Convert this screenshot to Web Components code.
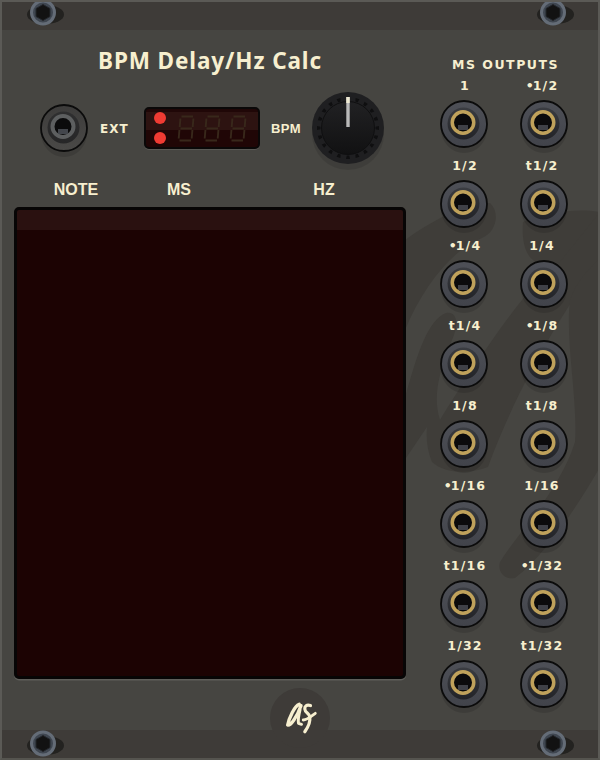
<!DOCTYPE html>
<html lang="en"><head><meta charset="utf-8"><title>BPM Delay/Hz Calc</title>
<style>html,body{margin:0;padding:0;background:#464541}</style></head>
<body>
<bpm-panel>
  <bpm-screw slot="top"></bpm-screw><bpm-screw slot="top"></bpm-screw>
  <bpm-screw slot="bottom"></bpm-screw><bpm-screw slot="bottom"></bpm-screw>
  <bpm-controls slot="left"></bpm-controls>
  <bpm-screen slot="left"></bpm-screen>
  <bpm-out slot="out">1</bpm-out><bpm-out slot="out"><span>•</span>1/2</bpm-out>
  <bpm-out slot="out">1/2</bpm-out><bpm-out slot="out">t1/2</bpm-out>
  <bpm-out slot="out"><span>•</span>1/4</bpm-out><bpm-out slot="out">1/4</bpm-out>
  <bpm-out slot="out">t1/4</bpm-out><bpm-out slot="out"><span>•</span>1/8</bpm-out>
  <bpm-out slot="out">1/8</bpm-out><bpm-out slot="out">t1/8</bpm-out>
  <bpm-out slot="out"><span>•</span>1/16</bpm-out><bpm-out slot="out">1/16</bpm-out>
  <bpm-out slot="out">t1/16</bpm-out><bpm-out slot="out"><span>•</span>1/32</bpm-out>
  <bpm-out slot="out">1/32</bpm-out><bpm-out slot="out">t1/32</bpm-out>
</bpm-panel>
<script>
function def(name, html){
  customElements.define(name, class extends HTMLElement{
    connectedCallback(){
      if(this.shadowRoot) return;
      this.attachShadow({mode:'open'}).innerHTML = typeof html==='function'?html(this):html;
    }
  });
}
def('bpm-panel', `<style>
:host{display:block;position:relative;width:600px;height:760px;box-sizing:border-box;background:#464541;overflow:hidden;
 border:2px solid #5b5a56;border-bottom-color:#55544f;color:#f7efcf}
.wm{position:absolute;left:-2px;top:-2px;width:600px;height:760px;z-index:0}
.band{position:relative;z-index:1;display:flex;justify-content:space-between;height:28px;padding:0 24px 0 25px;background:#3e3b38}
.band.b{padding-top:3px;box-sizing:border-box}
.main{position:relative;z-index:2;display:flex;height:700px;padding-left:12px}
.left{width:392px}
.right{width:160px;margin-left:18px}
h1{margin:0;height:62px;display:flex;align-items:center;justify-content:center;font:700 22.5px/1 "Noto Sans",sans-serif;letter-spacing:.9px;color:#f7efcf}
h2{margin:28px 0 0;height:14px;text-align:center;font:700 12.5px/14px "DejaVu Sans",sans-serif;letter-spacing:1.5px;color:#f7efcf;padding-left:3px}
.grid{display:grid;grid-template-columns:80px 80px;grid-auto-rows:80px;margin-top:8px}
.logo{position:absolute;z-index:3;left:268px;top:686px;width:60px;height:60px}
</style>
<svg class="wm" viewBox="0 0 600 760" aria-hidden="true"><g fill="#3f3d39">
<path d="M405 240C430 222 462 204 490 203C500 212 497 232 482 238C452 250 424 285 405 330Z"/>
<path d="M406 394C418 352 428 320 446 313C456 311 460 322 452 340C440 370 432 395 440 420C452 400 490 340 522 300C548 265 575 235 600 212V262C570 300 520 380 488 467C470 474 445 474 432 462C427 450 426 438 427 427L406 458Z"/>
<path d="M570 300C577 280 590 268 600 258V467C575 510 545 555 515 578C505 580 497 572 500 562C520 530 560 490 575 442C578 400 565 340 570 300Z"/>
<path d="M523 222C545 212 580 208 600 212L560 262C540 270 520 262 523 222Z"/>
</g></svg>
<div class="band"><slot name="top"></slot></div>
<div class="main">
  <div class="left"><h1>BPM Delay/Hz Calc</h1><slot name="left"></slot></div>
  <div class="right"><h2>MS OUTPUTS</h2><div class="grid"><slot name="out"></slot></div></div>
</div>
<div class="band b"><slot name="bottom"></slot></div>
<svg class="logo" viewBox="0 0 60 60" aria-label="logo"><circle cx="30" cy="30" r="30" fill="#3e3b38"/>
<g fill="none" stroke="#f7efcf" stroke-linecap="round" stroke-linejoin="round" transform="translate(-.5 -2)">
<path stroke-width="3.4" d="M29.7 18.3C25 20 19.5 32 18.2 39C21 40 27.5 31 31.5 19.7"/>
<path stroke-width="3" d="M30.5 24C29 30 28.5 35 29 37.3L32 38.3"/>
<path stroke-width="3.2" d="M41 19.5C37 18.5 35 20 35.3 23C35.5 27 40 27 40.3 31C41 36 38 42 35.3 45.7"/>
<path stroke-width="2.8" d="M33.7 34C38 34 42 30 45.8 27.3"/>
</g></svg>`);

def('bpm-screw', `<style>:host{display:block;width:37px;height:28px;position:relative}
svg{position:absolute;left:0;top:-2px;width:37px;height:30px;overflow:visible}</style>
<svg viewBox="0 0 37 30"><ellipse cx="18.5" cy="14.5" rx="18.5" ry="9.5" fill="#232220"/>
<circle cx="16" cy="12.5" r="11.5" fill="#3f4650" stroke="#646c77" stroke-width="3"/>
<polygon points="16,4.5 23,8.5 23,16.5 16,20.5 9,16.5 9,8.5" fill="#121212" stroke="#23262a"/></svg>`);

const portSvg = (ring, outer, mid, rw, tab) => `<svg viewBox="0 0 48 58" width="48" height="58">
<defs><linearGradient id="g" x1="0" y1="0" x2="0" y2="1"><stop offset="0" stop-color="${outer[0]}"/><stop offset="1" stop-color="${outer[1]}"/></linearGradient>
<linearGradient id="m" x1="0" y1="0" x2="0" y2="1"><stop offset="0" stop-color="${mid[0]}"/><stop offset="1" stop-color="${mid[1]}"/></linearGradient></defs>
<ellipse cx="24" cy="29" rx="23" ry="24" fill="#000" opacity=".12"/>
<circle cx="24" cy="24" r="23" fill="url(#g)" stroke="#0b0b0b" stroke-width="1.8"/>
<circle cx="23.5" cy="23.5" r="16" fill="url(#m)"/>
<circle cx="23" cy="22.5" r="${12.5-rw/2}" fill="#0b0b0c" stroke="${ring}" stroke-width="${rw}"/>
<rect x="18" y="25" width="10" height="5" fill="${tab}"/></svg>`;
def('bpm-port', h=>`<style>:host{display:block;width:48px;height:48px}svg{display:block;overflow:visible}</style>`+
  (h.hasAttribute('ext')?portSvg('#5d5f60',['#3d3c3b','#4a4947'],['#2f2f30','#262627'],4,'#43464c'):portSvg('#c0a25b',['#4e5057','#41434a'],['#3a3c41','#222327'],3.5,'#3f4147')));

def('bpm-out', `<style>:host{display:flex;flex-direction:column;align-items:center;width:80px;height:80px}
.l{height:14px;font:700 12.5px/14px "DejaVu Sans",sans-serif;letter-spacing:1.2px;color:#f7efcf;white-space:nowrap;margin:-1px 0 7px 2px}
:host(:nth-child(even)) .l{margin:-1px 4px 7px 0}
::slotted(span){letter-spacing:-1px}</style>
<div class="l"><slot></slot></div><bpm-port></bpm-port>`);

def('bpm-seg', `<style>:host{display:block;width:18px;height:27px}svg{display:block}</style>
<svg viewBox="0 0 18 27" width="18" height="27"><g fill="none" stroke="#38281b" stroke-width="1.9">
<path d="M4.5 1.5H16M3.4 3.5L2.7 12M16.4 3.5L15.7 12M3.5 13.5H15M2.4 15L1.7 23.5M15.4 15L14.7 23.5M2.5 25.5H14"/></g></svg>`);

def('bpm-display', `<style>:host{display:block;width:116px;height:42px;box-sizing:border-box;border:2.5px solid #0a0808;border-radius:5px;
 background:linear-gradient(#200707 0 3px,#2d1311 3px 21px,#200606 21px);box-shadow:0 1px 0 #5a5955}
.r{display:flex;align-items:center;height:100%;padding-left:7.5px}
.dots{display:flex;flex-direction:column;gap:8px;width:12px;margin-right:9.5px}
i{display:block;width:12px;height:12px;border-radius:50%;background:#ef3b33}
.d{display:flex;gap:8px;margin-left:2px}</style>
<div class="r"><div class="dots"><i></i><i></i></div><div class="d"><bpm-seg></bpm-seg><bpm-seg></bpm-seg><bpm-seg></bpm-seg></div></div>`);

def('bpm-knob', ()=>{
  let n='';
  for(let i=0;i<20;i++){ n+=`<polygon points="-2,-31 2,-31 1.2,-27.5 -1.2,-27.5" fill="#0f0f10" transform="rotate(${i*18})"/>`; }
  return `<style>:host{display:block;width:72px;height:72px}svg{display:block;overflow:visible}</style>
<svg viewBox="-36 -36 72 72" width="72" height="72"><defs><linearGradient id="k" x1="0" y1="0" x2="0" y2="1"><stop offset="0" stop-color="#212123"/><stop offset="1" stop-color="#111112"/></linearGradient></defs>
<circle cx="0" cy="6" r="36" fill="#000" opacity=".1"/>
<circle r="36" fill="#1f1f21"/>${n}
<circle r="26.5" fill="url(#k)" stroke="#0f0f10" stroke-width="1"/>
<rect x="-1.7" y="-31" width="3.4" height="30" fill="#b9b9b9"/><rect x="-1.7" y="-31" width="3.4" height="6" fill="#eee9d2"/></svg>`;
});

def('bpm-controls', `<style>:host{display:block}
.row{display:flex;align-items:center;height:72px;padding-left:26px}
.s{font:700 12px/14px "DejaVu Sans",sans-serif;letter-spacing:1px;color:#f7efcf;white-space:nowrap;position:relative;top:1px}
.e{width:32px;margin:0 12px}
.b{width:30px;margin:0 11px;font-family:"Liberation Sans",sans-serif;font-size:13px;letter-spacing:.3px}
.hdr{display:grid;grid-template-columns:124px 82px 172px;margin-top:15px;height:22px;margin-bottom:6px;font:700 16px/22px "Liberation Sans",sans-serif;color:#f7efcf;text-align:center}
.hdr span:nth-child(3){margin-right:-36px}
</style>
<div class="row"><bpm-port ext></bpm-port><span class="s e">EXT</span><bpm-display></bpm-display><span class="s b">BPM</span><bpm-knob></bpm-knob></div>
<div class="hdr"><span>NOTE</span><span>MS</span><span>HZ</span></div>`);

def('bpm-screen', `<style>:host{display:block;width:392.5px;height:471.5px;box-sizing:border-box;border:3px solid #070505;border-radius:5px;margin-left:-.5px;
 background:linear-gradient(#2a1110 0 20px,#1c0303 20px);box-shadow:0 1.5px 0 #5f5e5a}</style>`);
</script>
</body></html>
